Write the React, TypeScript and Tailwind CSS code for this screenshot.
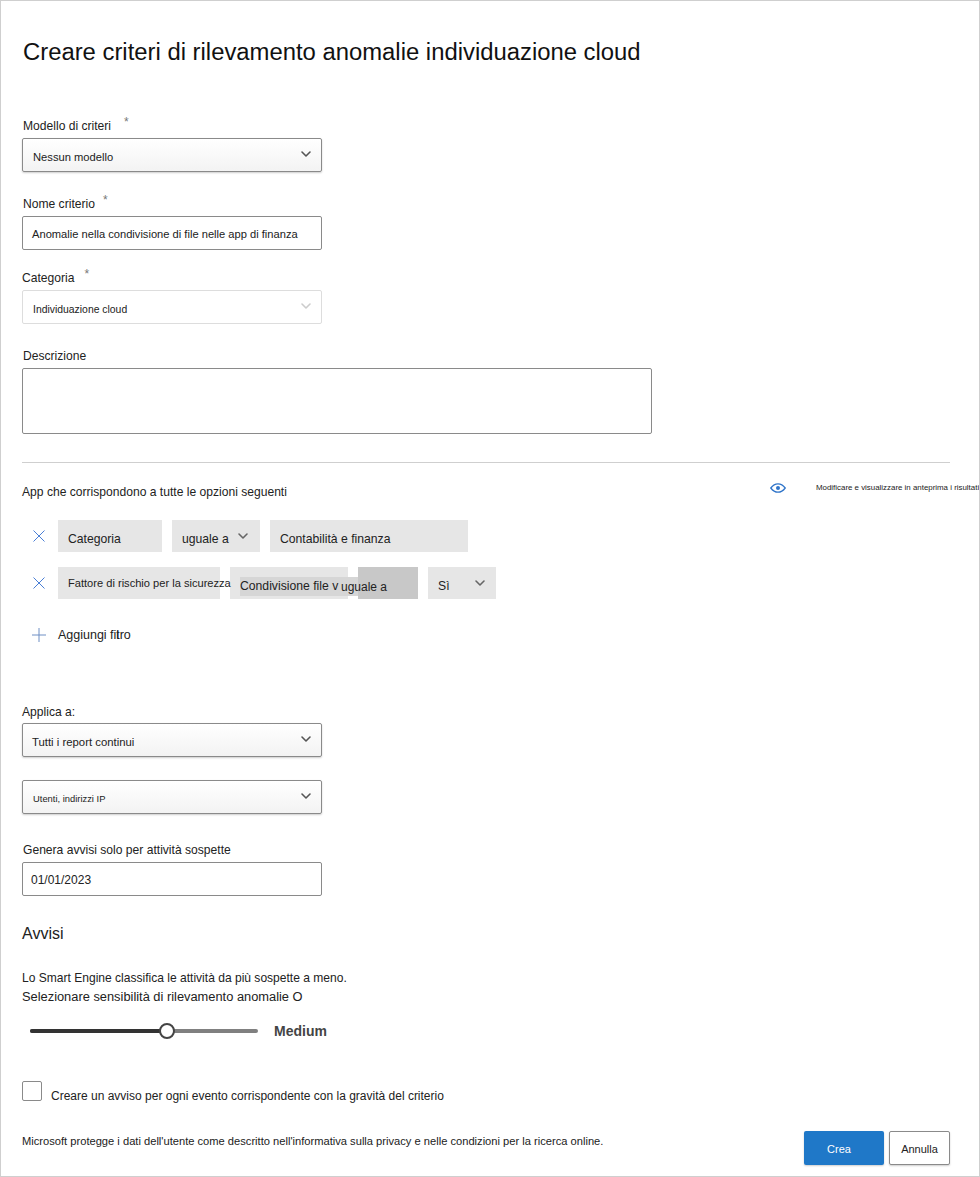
import { ChevronDown } from 'lucide-react';

function Label({ text, star, starClass, className }: { text: string; star?: boolean; starClass?: string; className: string }) {
  return (
    <div className={`flex h-4 items-center text-[12.1px] leading-4 text-[#222] ${className}`}>
      <span>{text}</span>
      {star && <span className={`-translate-y-1 text-[12px] text-[#777] ${starClass}`}>*</span>}
    </div>
  );
}

function Select({ text, textClass, disabled, className }: { text: string; textClass: string; disabled?: boolean; className: string }) {
  return (
    <div
      className={`flex h-[34px] w-[300px] items-center justify-between rounded-[2px] border pr-[7px] ${
        disabled
          ? 'border-[#ddd] bg-white'
          : 'border-[#8a8a8a] bg-gradient-to-b from-white to-[#f3f3f3] shadow-[0_1px_2px_rgba(0,0,0,0.2)]'
      } ${className}`}
    >
      <span className={`text-[#222] ${textClass}`}>{text}</span>
      <ChevronDown size={16} strokeWidth={2.4} className={`-translate-y-px ${disabled ? 'text-[#ccc]' : 'text-[#555]'}`} />
    </div>
  );
}

function Input({ text, textClass, className }: { text: string; textClass: string; className: string }) {
  return (
    <div className={`flex h-[34px] w-[300px] items-center rounded-[2px] border border-[#8a8a8a] bg-white pl-2 text-[#222] ${className}`}>
      <span className={`whitespace-nowrap pt-[2px] ${textClass}`}>{text}</span>
    </div>
  );
}

function CloseIcon() {
  return (
    <svg width="12" height="12" viewBox="0 0 12 12" className="shrink-0">
      <path d="M0.5 0.5L11.5 11.5M11.5 0.5L0.5 11.5" stroke="#4a7fd6" strokeWidth="1" fill="none" />
    </svg>
  );
}

function Chip({ className, children }: { className: string; children: React.ReactNode }) {
  return (
    <div className={`flex h-8 shrink-0 items-center whitespace-nowrap text-[12.2px] text-[#222] ${className}`}>
      {children}
    </div>
  );
}

export default function App() {
  return (
    <div className="h-[1177px] w-[980px] overflow-hidden border border-[#cfcfcf] bg-white font-['Liberation_Sans',Arial,sans-serif]">
      <div className="pl-[21px] pr-[29px]">
        <h1 className="mt-[35px] h-8 pl-px text-[23.85px] leading-8 font-normal whitespace-nowrap text-[#111]">
          Creare criteri di rilevamento anomalie individuazione cloud
        </h1>

        <Label text="Modello di criteri" star starClass="ml-[13px]" className="mt-[50px] pl-px" />
        <Select text="Nessun modello" textClass="pt-[4px] pl-[10px] text-[11.2px]" className="mt-[4px]" />

        <Label text="Nome criterio" star starClass="ml-2" className="mt-6 pl-px" />
        <Input text="Anomalie nella condivisione di file nelle app di finanza" textClass="pl-px text-[11.15px]" className="mt-[4px]" />

        <Label text="Categoria" star starClass="ml-[10px]" className="mt-5" />
        <Select text="Individuazione cloud" textClass="pt-[6px] pl-[10px] text-[10.4px]" disabled className="mt-[4px]" />

        <Label text="Descrizione" className="mt-[24px] pl-px" />
        <div className="mt-[4px] h-[66px] w-[630px] rounded-[2px] border border-[#8a8a8a] bg-white" />

        <div className="mt-7 h-px bg-[#cfcfcf]" />

        <div className="mt-[21px] flex h-4 items-center justify-between">
          <span className="text-[12.1px] text-[#222]">App che corrispondono a tutte le opzioni seguenti</span>
          <div className="-mr-[29px] -mt-2 flex w-[209px] shrink-0 items-center overflow-hidden">
            <svg width="16" height="10" viewBox="0 0 16 10" className="shrink-0">
              <path d="M0.8 5C3 2 5.3 0.8 8 0.8S13 2 15.2 5C13 8 10.7 9.2 8 9.2S3 8 0.8 5Z" stroke="#2f74c9" strokeWidth="1.3" fill="none" />
              <circle cx="8" cy="5" r="2" fill="#2f74c9" />
            </svg>
            <span className="ml-[30px] text-[7.9px] whitespace-nowrap text-[#222]">Modificare e visualizzare in anteprima i risultati</span>
          </div>
        </div>

        <div className="mt-[20px] flex items-center gap-[10px] pl-[11px]">
          <div className="mr-[3px] flex w-[12px] justify-center"><CloseIcon /></div>
          <Chip className="w-[104px] bg-[#e6e6e6] pl-[10px]"><span className="pt-[7px]">Categoria</span></Chip>
          <Chip className="w-[88px] justify-between bg-[#e6e6e6] pl-[10px] pr-[9px]">
            <span className="pt-[7px]">uguale a</span>
            <ChevronDown size={16} strokeWidth={2.4} className="text-[#666]" />
          </Chip>
          <Chip className="w-[198px] bg-[#e6e6e6] pl-[10px]"><span className="pt-[7px]">Contabilità e finanza</span></Chip>
        </div>

        <div className="mt-[15px] flex items-center gap-[10px] pl-[11px]">
          <div className="mr-[3px] flex w-[12px] justify-center"><CloseIcon /></div>
          <Chip className="relative z-10 w-[162px] bg-[#e6e6e6] pl-[10px]"><span className="text-[11.1px]">Fattore di rischio per la sicurezza</span></Chip>
          <Chip className="w-[118px] bg-[#e6e6e6] pl-[10px]">
            <span className="mt-[7px] w-[118px] shrink-0 bg-[#d6d6d6]">Condivisione file v</span>
          </Chip>
          <Chip className="relative z-10 w-[60px] bg-[#c8c8c8]">
            <span className="-ml-[17px] pt-[7px] text-[12px]">uguale a</span>
          </Chip>
          <Chip className="w-[68px] justify-between bg-[#e6e6e6] pl-[10px] pr-[8px]">
            <span className="pt-[7px]">Sì</span>
            <ChevronDown size={16} strokeWidth={2.4} className="text-[#666]" />
          </Chip>
        </div>

        <div className="mt-[28px] flex h-4 items-center pl-[10px]">
          <svg width="14" height="14" viewBox="0 0 14 14" className="shrink-0">
            <path d="M7 0V14M0 7H14" stroke="#6f8fc4" strokeWidth="1" fill="none" />
          </svg>
          <span className="ml-[12px] text-[12.5px] text-[#222]">
            Aggiungi fil<span className="-ml-[3px]">tro</span>
          </span>
        </div>

        <Label text="Applica a:" className="mt-[61px]" />
        <Select text="Tutti i report continui" textClass="pt-[5px] pl-[9px] text-[11.35px]" className="mt-[3px]" />
        <Select text="Utenti, indirizzi IP" textClass="pt-[4px] pl-[10px] text-[9.4px]" className="mt-[23px]" />

        <Label text="Genera avvisi solo per attività sospette" className="mt-[28px] pl-px" />
        <Input text="01/01/2023" textClass="text-[12px]" className="mt-[4px]" />

        <h2 className="mt-[28px] h-5 text-[16px] leading-5 font-normal text-[#222]">Avvisi</h2>

        <p className="mt-[24px] leading-[18px] text-[#222]">
          <span className="text-[12.05px]">Lo Smart Engine classifica le attività da più sospette a meno.</span>
          <br />
          <span className="text-[12.85px]">Selezionare sensibilità di rilevamento anomalie O</span>
        </p>

        <div className="mt-[15px] flex h-5 items-center pl-2">
          <div className="relative h-[4px] w-[228px] rounded-full bg-[#808080]">
            <div className="h-full w-[137px] rounded-full bg-[#333]" />
            <div className="absolute top-1/2 left-[129px] size-4 -translate-y-1/2 rounded-full border-2 border-[#444] bg-white" />
          </div>
          <span className="ml-4 text-[14px] font-bold text-[#444]">Medium</span>
        </div>

        <div className="mt-[40px] flex items-start">
          <div className="size-5 rounded-[2px] border border-[#8a8a8a] bg-white" />
          <span className="mt-[7px] ml-[9px] text-[12px] leading-4 text-[#222]">
            Creare un avviso per ogni evento corrispondente con la gravità del criterio
          </span>
        </div>

        <div className="mt-[27px] flex items-start justify-between">
          <span className="mt-[2px] text-[11.15px] text-[#222]">
            Microsoft protegge i dati dell'utente come descritto nell'informativa sulla privacy e nelle condizioni per la ricerca online.
          </span>
          <div className="flex gap-[5px]">
            <button className="h-[34px] w-[80px] rounded-[2px] bg-[#1f78c8] pt-[3px] pr-[10px] text-[11px] text-white shadow-[0_1px_2px_rgba(0,0,0,0.2)]">Crea</button>
            <button className="h-[34px] w-[61px] rounded-[2px] border border-[#8a8a8a] bg-white pt-[3px] text-[11px] text-[#222] shadow-[0_1px_2px_rgba(0,0,0,0.2)]">Annulla</button>
          </div>
        </div>
      </div>
    </div>
  );
}
